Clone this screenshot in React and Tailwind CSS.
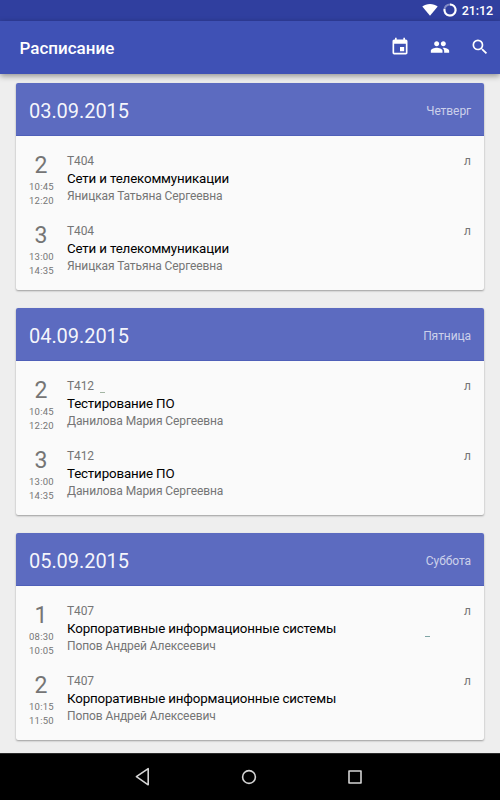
import React from 'react';
import { MdEvent, MdPeople, MdSearch } from 'react-icons/md';

const days = [
    {
        date: '03.09.2015',
        weekday: 'Четверг',
        lessons: [
            { number: 2, start: '10:45', end: '12:20', room: 'Т404', subject: 'Сети и телекоммуникации', teacher: 'Яницкая Татьяна Сергеевна', type: 'л' },
            { number: 3, start: '13:00', end: '14:35', room: 'Т404', subject: 'Сети и телекоммуникации', teacher: 'Яницкая Татьяна Сергеевна', type: 'л' }
        ]
    },
    {
        date: '04.09.2015',
        weekday: 'Пятница',
        lessons: [
            { number: 2, start: '10:45', end: '12:20', room: 'Т412', subject: 'Тестирование ПО', teacher: 'Данилова Мария Сергеевна', type: 'л', mark: 'room' },
            { number: 3, start: '13:00', end: '14:35', room: 'Т412', subject: 'Тестирование ПО', teacher: 'Данилова Мария Сергеевна', type: 'л' }
        ]
    },
    {
        date: '05.09.2015',
        weekday: 'Суббота',
        lessons: [
            { number: 1, start: '08:30', end: '10:05', room: 'Т407', subject: 'Корпоративные информационные системы', teacher: 'Попов Андрей Алексеевич', type: 'л', mark: 'side' },
            { number: 2, start: '10:15', end: '11:50', room: 'Т407', subject: 'Корпоративные информационные системы', teacher: 'Попов Андрей Алексеевич', type: 'л' }
        ]
    }
];

const StatusBar = () => (
    <div className="h-[21px] shrink-0 flex items-center justify-end bg-[#303f9f] pr-[7px] text-white">
        <svg className="w-4 h-3 mr-[5px] -mt-px" viewBox="0 0 16 12" fill="currentColor">
            <path d="M8 11.8 0.3 2.6C2.4 1 5 0.1 8 0.1s5.6 0.9 7.7 2.5z" />
        </svg>
        <svg className="w-[14px] h-[14px] mr-[5px] -mt-px" viewBox="0 0 14 14" fill="none" stroke="currentColor" strokeWidth="2">
            <circle cx="7" cy="7" r="5.6" opacity="0.4" />
            <path d="M7 1.4A5.6 5.6 0 1 1 1.5 6" />
        </svg>
        <span className="text-[12.5px] leading-[21px] font-medium tracking-[-0.1px]">21:12</span>
    </div>
);

const AppBar = () => (
    <header className="relative z-10 h-[53px] shrink-0 flex items-center justify-between bg-[#3f51b5] pl-[19.5px] pr-[10px] text-white shadow-[0_2px_6px_rgba(0,0,0,0.4)]">
        <h1 className="pt-px text-[17px] leading-[26px] font-medium">Расписание</h1>
        <div className="flex items-center gap-5 pb-[2px]">
            <button><MdEvent className="w-5 h-5" /></button>
            <button><MdPeople className="w-5 h-5" /></button>
            <button><MdSearch className="w-5 h-5" /></button>
        </div>
    </header>
);

const Lesson = ({ lesson }) => (
    <div className="relative h-[70px] flex pt-[6px]">
        <div className="w-[25px] mr-[13px] flex flex-col items-center text-[#757575]">
            <span className="text-[23px] leading-[27px] h-[28px] pr-px">{lesson.number}</span>
            <span className="text-[9.5px] leading-[14px] tracking-[0.25px]">{lesson.start}</span>
            <span className="text-[9.5px] leading-[13px] tracking-[0.25px]">{lesson.end}</span>
        </div>
        <div className="flex-1 pt-px whitespace-nowrap text-[12px] tracking-[-0.1px] text-[#757575]">
            <div className="leading-[17px]">{lesson.room}</div>
            <div className="text-[13.33px] leading-[18px] tracking-[-0.16px] text-black">{lesson.subject}</div>
            <div className="leading-[17px]">{lesson.teacher}</div>
        </div>
        <div className="pt-px text-[12px] leading-[17px] text-[#757575]">{lesson.type}</div>
        {lesson.mark === 'room' && <span className="absolute left-[71px] top-[21px] w-[5px] h-px bg-[#a3b5a3]" />}
        {lesson.mark === 'side' && <span className="absolute left-[396px] top-[40px] w-[5px] h-px bg-[#7fa5a5]" />}
    </div>
);

const DayCard = ({ day }) => (
    <section className="h-[207px] shrink-0 rounded-[2px] bg-[#fafafa] shadow-[0_1px_2px_rgba(0,0,0,0.35)] overflow-hidden">
        <div className="h-[53px] flex items-center justify-between bg-[#5c6bc0] border-b border-[#4f5fb8] pl-[13px] pr-[13px] pt-[3px]">
            <h2 className="text-[20px] tracking-[-0.05px] text-white/95">{day.date}</h2>
            <span className="text-[12px] tracking-[-0.08px] text-white/70">{day.weekday}</span>
        </div>
        <div className="px-[13px] pt-[10px]">
            {day.lessons.map((lesson) => (
                <Lesson key={lesson.number} lesson={lesson} />
            ))}
        </div>
    </section>
);

const NavBar = () => (
    <nav className="h-[47px] shrink-0 flex items-center justify-center gap-[86px] bg-black border-t border-[#2a2a2a] pr-[2px] text-[#d4d4d4]">
        <svg className="w-5 h-5" viewBox="0 0 20 20" fill="none" stroke="currentColor" strokeWidth="1.6" strokeLinejoin="round">
            <path d="M15.2 1.6v16.2L3.4 9.7z" />
        </svg>
        <svg className="w-5 h-5" viewBox="0 0 20 20" fill="none" stroke="currentColor" strokeWidth="1.6">
            <circle cx="10" cy="10" r="6.4" />
        </svg>
        <svg className="w-5 h-5" viewBox="0 0 20 20" fill="none" stroke="currentColor" strokeWidth="1.6" strokeLinejoin="round">
            <rect x="4" y="4" width="12" height="12" />
        </svg>
    </nav>
);

const App = () => {
    return (
        <div className="w-[500px] h-[800px] flex flex-col overflow-hidden bg-[#eeeeee] font-[Roboto,sans-serif]">
            <StatusBar />
            <AppBar />
            <main className="flex-1 min-h-0 overflow-hidden flex flex-col gap-[18px] px-4 pt-[9px]">
                {days.map((day) => (
                    <DayCard key={day.date} day={day} />
                ))}
            </main>
            <NavBar />
        </div>
    );
};

export default App;
